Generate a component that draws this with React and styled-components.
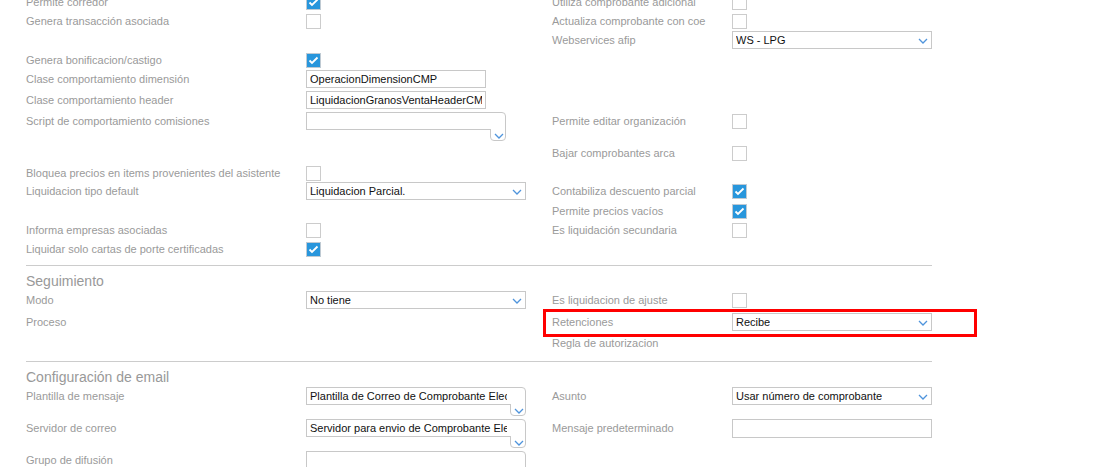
import React from 'react';
import styled, { createGlobalStyle } from 'styled-components';

const GlobalStyle = createGlobalStyle`
  html, body { margin: 0; padding: 0; background: #fff; overflow: hidden; }
  body { font-family: "Liberation Sans", Arial, sans-serif; }
`;

const Page = styled.div`
  margin-top: -7px;
  padding-left: 26px;
  width: 906px;
`;

const Row = styled.div`
  position: relative;
  display: grid;
  grid-template-columns: 280px 246px 180px 200px;
  align-items: start;
  height: ${(p) => p.$h}px;
`;

const Label = styled.div`
  font-size: 11px;
  line-height: 18px;
  color: #9a9a9a;
  white-space: nowrap;
`;

const Cell = styled.div`
  display: flex;
  align-items: flex-start;
`;

const Box = styled.span`
  box-sizing: border-box;
  width: 15px;
  height: 15px;
  margin-top: 2px;
  border: 1px solid ${(p) => (p.$checked ? '#bfcad3' : '#cccccc')};
  background: ${(p) => (p.$checked ? '#2896dc' : '#ffffff')};
  display: flex;
  align-items: center;
  justify-content: center;
`;

const Field = styled.div`
  box-sizing: border-box;
  width: ${(p) => p.$w}px;
  height: ${(p) => p.$h || 18}px;
  border: 1px solid #c8c8c8;
  background: #fff;
  display: flex;
  align-items: center;
  justify-content: space-between;
  padding: 0 3px;
  font-size: 11px;
  color: #111;
  white-space: nowrap;
  overflow: hidden;
`;

const FieldText = styled.span`
  display: block;
  min-width: 0;
  overflow: hidden;
  white-space: nowrap;
`;

const Chevron = styled.svg`
  flex: none;
  margin-top: ${(p) => p.$mt || 2}px;
`;

const Combo = styled.div`
  display: flex;
  align-items: flex-start;
  width: ${(p) => p.$w}px;
`;

const ComboInput = styled.div`
  flex: 1;
  min-width: 0;
  box-sizing: border-box;
  height: 18px;
  border: 1px solid #c8c8c8;
  border-right: none;
  background: #fff;
  position: relative;
  z-index: 1;
  margin-right: -1px;
  padding: 0 4px 0 3px;
  font-size: 11px;
  line-height: 16px;
  color: #111;
`;

const ComboArrow = styled.div`
  box-sizing: border-box;
  flex: none;
  width: 16px;
  height: 29px;
  border: 1px solid #c8c8c8;
  border-radius: 0 4px 4px 4px;
  padding: 12px 0 0 3px;
`;

const Divider = styled.div`
  margin-top: 6px;
  border-top: 1px solid #cccccc;
  width: 906px;
`;

const Heading = styled.div`
  margin-top: 5px;
  font-size: 14px;
  line-height: 20px;
  color: #999;
`;

const Highlight = styled.div`
  position: absolute;
  left: 517px;
  top: -4px;
  width: 434px;
  height: 28px;
  box-sizing: border-box;
  border: 3px solid #ff0000;
  pointer-events: none;
`;

const ChevronIcon = ({ mt }) => (
  <Chevron $mt={mt} width="10" height="6" viewBox="0 0 10 6">
    <polyline points="1,1 5,5 9,1" fill="none" stroke="#4f94dc" strokeWidth="1.3" />
  </Chevron>
);

const Check = ({ checked }) => (
  <Box $checked={checked}>
    {checked && (
      <svg width="13" height="13" viewBox="0 0 13 13">
        <polyline points="2.5,6.5 5,9 10.5,3.5" fill="none" stroke="#fff" strokeWidth="1.8" />
      </svg>
    )}
  </Box>
);

const Control = ({ c }) => {
  if (!c) return null;
  if (c.type === 'check') return <Check checked={c.checked} />;
  if (c.type === 'text')
    return (
      <Field $w={c.w} $h={c.h}>
        <FieldText>{c.value}</FieldText>
      </Field>
    );
  if (c.type === 'select')
    return (
      <Field $w={c.w}>
        <FieldText>{c.value}</FieldText>
        <ChevronIcon />
      </Field>
    );
  if (c.type === 'combo')
    return (
      <Combo $w={c.w}>
        <ComboInput>
          <FieldText>{c.value}</FieldText>
        </ComboInput>
        <ComboArrow>
          <ChevronIcon mt={0} />
        </ComboArrow>
      </Combo>
    );
  return null;
};

const FormRow = ({ r }) => (
  <Row $h={r.h}>
    <Label>{r.l}</Label>
    <Cell>
      <Control c={r.lc} />
    </Cell>
    <Label>{r.r}</Label>
    <Cell>
      <Control c={r.rc} />
    </Cell>
    {r.highlight && <Highlight />}
  </Row>
);

const chk = (checked) => ({ type: 'check', checked });

const general = [
  { h: 19, l: 'Permite corredor', lc: chk(true), r: 'Utiliza comprobante adicional', rc: chk(false) },
  { h: 19, l: 'Genera transacción asociada', lc: chk(false), r: 'Actualiza comprobante con coe', rc: chk(false) },
  { h: 20, r: 'Webservices afip', rc: { type: 'select', value: 'WS - LPG', w: 200 } },
  { h: 19, l: 'Genera bonificacion/castigo', lc: chk(true) },
  { h: 21, l: 'Clase comportamiento dimensión', lc: { type: 'text', value: 'OperacionDimensionCMP', w: 180 } },
  { h: 21, l: 'Clase comportamiento header', lc: { type: 'text', value: 'LiquidacionGranosVentaHeaderCMP', w: 180 } },
  { h: 32, l: 'Script de comportamiento comisiones', lc: { type: 'combo', value: '', w: 200 }, r: 'Permite editar organización', rc: chk(false) },
  { h: 20, r: 'Bajar comprobantes arca', rc: chk(false) },
  { h: 18, l: 'Bloquea precios en items provenientes del asistente', lc: chk(false) },
  { h: 20, l: 'Liquidacion tipo default', lc: { type: 'select', value: 'Liquidacion Parcial.', w: 220 }, r: 'Contabiliza descuento parcial', rc: chk(true) },
  { h: 19, r: 'Permite precios vacíos', rc: chk(true) },
  { h: 19, l: 'Informa empresas asociadas', lc: chk(false), r: 'Es liquidación secundaria', rc: chk(false) },
  { h: 19, l: 'Liquidar solo cartas de porte certificadas', lc: chk(true) },
];

const seguimiento = [
  { h: 22, l: 'Modo', lc: { type: 'select', value: 'No tiene', w: 220 }, r: 'Es liquidacion de ajuste', rc: chk(false) },
  { h: 21, l: 'Proceso', r: 'Retenciones', rc: { type: 'select', value: 'Recibe', w: 200 }, highlight: true },
  { h: 21, r: 'Regla de autorizacion' },
];

const email = [
  { h: 32, l: 'Plantilla de mensaje', lc: { type: 'combo', value: 'Plantilla de Correo de Comprobante Electrónico', w: 220 }, r: 'Asunto', rc: { type: 'select', value: 'Usar número de comprobante', w: 200 } },
  { h: 32, l: 'Servidor de correo', lc: { type: 'combo', value: 'Servidor para envio de Comprobante Electrónico', w: 220 }, r: 'Mensaje predeterminado', rc: { type: 'text', value: '', w: 200, h: 19 } },
  { h: 32, l: 'Grupo de difusión', lc: { type: 'combo', value: '', w: 220 } },
];

export default function App() {
  return (
    <>
      <GlobalStyle />
      <Page>
        {general.map((r, i) => (
          <FormRow key={'g' + i} r={r} />
        ))}
        <Divider />
        <Heading>Seguimiento</Heading>
        {seguimiento.map((r, i) => (
          <FormRow key={'s' + i} r={r} />
        ))}
        <Divider />
        <Heading>Configuración de email</Heading>
        {email.map((r, i) => (
          <FormRow key={'e' + i} r={r} />
        ))}
      </Page>
    </>
  );
}
